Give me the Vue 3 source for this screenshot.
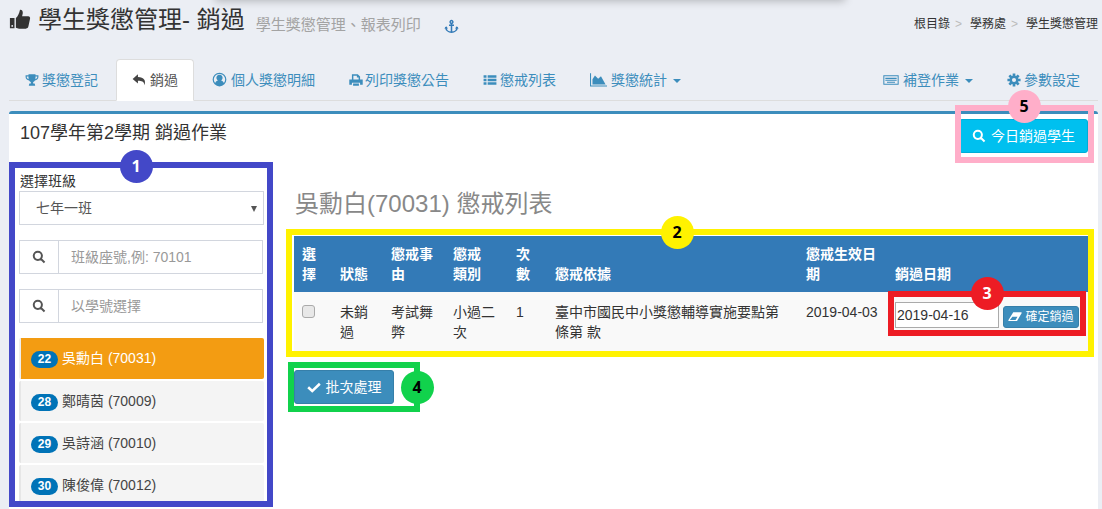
<script setup>
import { h } from 'vue'

// gear outline, teeth computed around the centre
const gear = () => {
  let d = ''
  for (let i = 0; i < 8; i++) {
    const a = (i * Math.PI) / 4
    const pts = [[-0.3, 7.8], [-0.2, 11.5], [0.2, 11.5], [0.3, 7.8]]
    pts.forEach(([t, r], j) => {
      const x = 12 + r * Math.cos(a + t)
      const y = 12 + r * Math.sin(a + t)
      d += `${i === 0 && j === 0 ? 'M' : 'L'}${x.toFixed(2)} ${y.toFixed(2)}`
    })
  }
  return d + 'Z M12 8.5a3.5 3.5 0 1 0 0 7a3.5 3.5 0 1 0 0-7Z'
}

const icons = {
  thumb: { f: 'M1 11h5v11H1zM3.500 18.500a1 1 0 1 0 0 2a1 1 0 1 0 0-2ZM7.500 11c2-1.500 3.600-5 4.500-9c2.200-.2 3.400 1.600 3 4l-.7 3H21c1.400 0 2.300 1.200 2 2.500l-1.800 8.500c-.3 1.400-1.300 2.500-2.800 2.500H11c-1.400 0-2.300-.8-3.500-.9z' },
  anchor: { s: 'M12 7v15M8 10h8M3 13c0 5 4 8 9 8s9-3 9-8M12 2.500a2.200 2.200 0 1 0 0 4.400a2.200 2.200 0 1 0 0-4.400Z', f: 'M0.500 15l3-3.500l3 3.500zM17.500 15l3-3.500l3 3.500z', sw: 2.4 },
  trophy: { f: 'M6 2h12v2h5v3c0 3-2.500 5.600-6 6c-.8 1.200-1.800 2-3 2.400V18h2.500l1 4H6.500l1-4H10v-2.600c-1.200-.4-2.200-1.200-3-2.400C3.500 12.600 1 10 1 7V4h5zM3 6v1c0 1.700 1.200 3 3.200 3.700C6 9.500 6 7.800 6 6zM21 6h-3c0 1.800 0 3.500-.2 4.700C19.800 10 21 8.700 21 7z' },
  reply: { f: 'M9.500 3.500L1 11L9.500 18.500v-4.500c6 0 9.500 1 10.500 7c2.500-7.500-.5-12.700-10.500-13z' },
  user: { f: 'M12 1a11 11 0 1 0 0 22a11 11 0 1 0 0-22ZM12 3a9 9 0 0 1 7 14.600c-1-2.300-2.800-3.600-4.500-4a5 5 0 1 0-5 0c-1.700.4-3.500 1.700-4.500 4A9 9 0 0 1 12 3Z' },
  print: { f: 'M5 2h10l4 4v5H16.500V7.500h-3V4.500h-6V11H5zM0.500 11h23v9H19v-3.500H5V20H0.500zM7 18h10v4H7z' },
  list: { f: 'M1 4h5v4H1zM8 4h15v4H8zM1 10h5v4H1zM8 10h15v4H8zM1 16h5v4H1zM8 16h15v4H8z' },
  chart: { f: 'M0 3h1.500v17.500H24V22H0zM3.500 19v-7.500l3.500-5l4.500 4.500l4-3.500l6.500 11.500z' },
  keyboard: { f: 'M0.500 5h23v14H0.500zM2 6.500v11h20v-11zM3.500 8.500h17v2h-17zM3.500 11.800h17v1.200h-17zM6 14.500h12v1.500H6z' },
  gear: { f: gear() },
  search: { s: 'M10 3a7 7 0 1 0 0 14a7 7 0 1 0 0-14ZM15 15l6.500 6.500', sw: 3.4 },
  check: { f: 'M3.500 10.500L9 16L20.500 4.500L23.500 8L9 22L.5 14z' },
  eraser: { f: 'M9 4h13.500c1 0 1.300 .8 .8 1.700L15.500 19H2c-1.300 0-1.800-1-1.200-2zM7.500 11.500L3.200 17h9.800l3.300-5.500z' }
}

const Ico = (p) => {
  const i = icons[p.name]
  return h('svg', { viewBox: '0 0 24 24', class: 'ico' }, [
    i.f ? h('path', { d: i.f, fill: 'currentColor', 'fill-rule': 'evenodd' }) : null,
    i.s ? h('path', { d: i.s, fill: 'none', stroke: 'currentColor', 'stroke-width': i.sw }) : null
  ])
}
Ico.props = ['name']

const leftTabs = [
  { icon: 'trophy', text: '獎懲登記' },
  { icon: 'reply', text: '銷過', active: true },
  { icon: 'user', text: '個人獎懲明細' },
  { icon: 'print', text: '列印獎懲公告' },
  { icon: 'list', text: '懲戒列表' },
  { icon: 'chart', text: '獎懲統計', caret: true }
]
const rightTabs = [
  { icon: 'keyboard', text: '補登作業', caret: true },
  { icon: 'gear', text: '參數設定' }
]
const students = [
  { no: 22, name: '吳勳白 (70031)', active: true },
  { no: 28, name: '鄭晴茵 (70009)' },
  { no: 29, name: '吳詩涵 (70010)' },
  { no: 30, name: '陳俊偉 (70012)' }
]
const marks = [
  { id: 1, cls: 'm1' },
  { id: 2, cls: 'm2' },
  { id: 3, cls: 'm3' },
  { id: 4, cls: 'm4' },
  { id: 5, cls: 'm5' }
]
</script>

<template>
  <div class="page">
    <div class="top-shadow"></div>

    <header class="head">
      <h1 class="title"><Ico name="thumb" class="title-ico" />學生獎懲管理- 銷過</h1>
      <span class="sub">學生獎懲管理、報表列印</span>
      <Ico name="anchor" class="anchor" />
      <div class="crumbs">
        <span>根目錄</span><i>&gt;</i><span>學務處</span><i>&gt;</i><span>學生獎懲管理</span>
      </div>
    </header>

    <nav class="tabs">
      <a v-for="t in leftTabs" :key="t.text" class="tab" :class="{ active: t.active }">
        <Ico :name="t.icon" :class="'tab-ico i-' + t.icon" />{{ t.text }}<b v-if="t.caret" class="caret"></b>
      </a>
      <div class="tabs-right">
        <a v-for="t in rightTabs" :key="t.text" class="tab">
          <Ico :name="t.icon" :class="'tab-ico i-' + t.icon" />{{ t.text }}<b v-if="t.caret" class="caret"></b>
        </a>
      </div>
    </nav>

    <section class="panel">
      <div class="panel-head">
        <h2 class="panel-title">107學年第2學期 銷過作業</h2>
        <button class="btn-today"><Ico name="search" class="btn-ico" />今日銷過學生</button>
      </div>

      <div class="panel-body">
        <aside class="side">
          <label class="side-label">選擇班級</label>
          <div class="select-wrap">
            <select class="select"><option>七年一班</option></select>
          </div>
          <div class="search-box">
            <span class="addon"><Ico name="search" /></span>
            <input class="search-input" placeholder="班級座號,例: 70101" />
          </div>
          <div class="search-box">
            <span class="addon"><Ico name="search" /></span>
            <input class="search-input" placeholder="以學號選擇" />
          </div>
          <ul class="students">
            <li v-for="s in students" :key="s.no" class="student" :class="{ active: s.active }">
              <span class="badge">{{ s.no }}</span>{{ s.name }}
            </li>
          </ul>
        </aside>

        <main class="main">
          <h3 class="main-title">吳勳白(70031) 懲戒列表</h3>
          <table class="grid">
            <colgroup>
              <col style="width: 38px" />
              <col style="width: 51px" />
              <col style="width: 62px" />
              <col style="width: 63px" />
              <col style="width: 39px" />
              <col style="width: 251px" />
              <col style="width: 89px" />
              <col />
            </colgroup>
            <thead>
              <tr>
                <th>選擇</th>
                <th>狀態</th>
                <th>懲戒事由</th>
                <th>懲戒<br />類別</th>
                <th>次數</th>
                <th>懲戒依據</th>
                <th>懲戒生效日期</th>
                <th>銷過日期</th>
              </tr>
            </thead>
            <tbody>
              <tr>
                <td><input type="checkbox" class="check" /></td>
                <td>未銷過</td>
                <td>考試舞弊</td>
                <td>小過二次</td>
                <td>1</td>
                <td>臺中市國民中小獎懲輔導實施要點第 條第 款</td>
                <td>2019-04-03</td>
                <td>
                  <div class="undo">
                    <input class="date" value="2019-04-16" />
                    <button class="btn-confirm"><Ico name="eraser" class="btn-ico-s" />確定銷過</button>
                  </div>
                </td>
              </tr>
            </tbody>
          </table>
          <button class="btn-batch"><Ico name="check" class="btn-ico" />批次處理</button>
        </main>
      </div>
    </section>

    <!-- 說明用的標註框 -->
    <template v-for="m in marks" :key="m.id">
      <div class="mark-box" :class="m.cls"></div>
      <div class="mark-dot" :class="m.cls">{{ m.id }}</div>
    </template>
  </div>
</template>

<style>
html, body {
  margin: 0;
  background: #ebeef4;
}
</style>

<style scoped>
.page {
  position: relative;
  width: 1102px;
  height: 509px;
  overflow: hidden;
  background: #ebeef4;
  font-family: "Liberation Sans", "Noto Sans CJK TC", sans-serif;
  font-size: 14px;
  line-height: 20px;
  color: #333;
}

.top-shadow {
  position: absolute;
  left: 215px;
  top: -12px;
  width: 630px;
  height: 12px;
  box-shadow: 0 1px 8px rgba(0, 0, 0, 0.25);
}

.ico {
  display: inline-block;
  width: 14px;
  height: 14px;
  vertical-align: -2px;
}

/* 頁首 */
.head {
  height: 59px;
  box-sizing: border-box;
  padding: 5px 4px 0 9px;
  display: flex;
  align-items: flex-start;
}

.title {
  margin: 0;
  font-size: 24px;
  line-height: 30px;
  font-weight: 400;
  color: #333;
}

.title-ico {
  width: 22px;
  height: 22px;
  margin-right: 7px;
  vertical-align: -2px;
}

.sub {
  margin: 10px 0 0 11px;
  font-size: 15px;
  color: #a3a3a3;
}

.anchor {
  margin: 14px 0 0 23px;
  color: #337ab7;
  width: 15px;
  height: 15px;
}

.crumbs {
  margin: 9px 0 0 auto;
  font-size: 12px;
  line-height: 20px;
  white-space: nowrap;
}

.crumbs i {
  font-style: normal;
  color: #bbb;
  margin: 0 8px 0 5px;
}

/* 分頁 */
.tabs {
  height: 42px;
  box-sizing: border-box;
  margin: 0 4px 10px 9px;
  display: flex;
  border-bottom: 1px solid #ddd;
}

.tab {
  height: 42px;
  box-sizing: border-box;
  padding: 10px 15px;
  margin-right: 2px;
  border: 1px solid transparent;
  border-radius: 4px 4px 0 0;
  color: #3c8dbc;
  white-space: nowrap;
}

.tab.active {
  background: #fff;
  border-color: #ddd;
  border-bottom-color: #fff;
  color: #555;
}

.tab-ico {
  width: 14px;
  height: 14px;
  margin-right: 4px;
}

.tab-ico.i-trophy { width: 14px; margin-right: 3px; }
.tab-ico.i-reply { width: 15px; height: 15px; margin-right: 3px; }
.tab-ico.i-user { width: 15px; height: 15px; margin-right: 4px; }
.tab-ico.i-print { width: 14px; margin-right: 2px; }
.tab-ico.i-list { width: 14px; margin-right: 3px; }
.tab-ico.i-chart { width: 17px; height: 17px; margin-right: 4px; vertical-align: -3px; }
.tab-ico.i-keyboard { width: 16px; height: 16px; margin-right: 4px; vertical-align: -3px; }
.tab-ico.i-gear { width: 14px; margin-right: 3px; }

.tab.active .tab-ico {
  color: #444;
}

.caret {
  display: inline-block;
  margin-left: 6px;
  vertical-align: 2px;
  border-top: 4px solid #3c8dbc;
  border-left: 4px solid transparent;
  border-right: 4px solid transparent;
}

.tabs-right {
  margin-left: auto;
  padding-right: 2px;
  display: flex;
}

.tabs-right .tab {
  margin-right: 0;
  margin-left: 2px;
}

/* 內容面板 */
.panel {
  margin: 0 4px 0 9px;
  height: 398px;
  background: #fff;
  border-top: 3px solid #3c8dbc;
  border-radius: 3px 3px 0 0;
}

.panel-head {
  height: 57px;
  box-sizing: border-box;
  padding: 5px 10px 0 11px;
  display: flex;
  justify-content: space-between;
  align-items: flex-start;
}

.panel-title {
  margin: 0;
  font-size: 18px;
  line-height: 28px;
  font-weight: 400;
  color: #333;
}

.btn-today {
  height: 34px;
  padding: 0 12px;
  border: 1px solid #00acd6;
  border-radius: 3px;
  background: #00c0ef;
  color: #fff;
  font: inherit;
}

.btn-ico {
  margin-right: 5px;
}

.panel-body {
  padding: 0 10px;
  display: grid;
  grid-template-columns: 245px 794px;
  column-gap: 30px;
}

/* 左欄 */
.side {
  display: flex;
  flex-direction: column;
}

.side-label {
  padding-left: 1px;
  height: 20px;
}

.select-wrap {
  position: relative;
}

.select-wrap::after {
  content: "";
  position: absolute;
  right: 7px;
  top: 15px;
  border-top: 6px solid #555;
  border-left: 3px solid transparent;
  border-right: 3px solid transparent;
}

.select {
  display: block;
  width: 100%;
  height: 34px;
  box-sizing: border-box;
  padding: 0 16px;
  border: 1px solid #d2d6de;
  background: #fff;
  color: #555;
  font: inherit;
  appearance: none;
  border-radius: 0;
}

.search-box {
  display: flex;
  width: 244px;
  height: 34px;
  box-sizing: border-box;
  margin-top: 15px;
  border: 1px solid #d2d6de;
}

.addon {
  width: 38px;
  flex: none;
  border-right: 1px solid #d2d6de;
  display: flex;
  align-items: center;
  justify-content: center;
  color: #555;
}

.search-input {
  flex: 1;
  min-width: 0;
  padding: 0 12px;
  border: 0;
  outline: 0;
  font: inherit;
  color: #555;
}

.search-input::placeholder {
  color: #999;
  opacity: 1;
}

.students {
  list-style: none;
  margin: 15px 0 0;
  padding: 0;
  display: flex;
  flex-direction: column;
  gap: 2px;
}

.student {
  height: 40px;
  box-sizing: border-box;
  padding: 10px;
  background: #f4f4f4;
  border-left: 2px solid #e6e6e6;
  border-radius: 2px;
  color: #444;
  white-space: nowrap;
}

.student.active {
  height: 41px;
  background: #f39c12;
  border-left-color: #eee;
  color: #fff;
}

.badge {
  display: inline-block;
  width: 27px;
  height: 17px;
  margin-right: 4px;
  border-radius: 9px;
  background: #0073b7;
  color: #fff;
  font-size: 12px;
  font-weight: 700;
  line-height: 17px;
  text-align: center;
}

/* 右欄 */
.main-title {
  margin: 16px 0 15px 1px;
  font-size: 24px;
  line-height: 34px;
  font-weight: 400;
  color: #888;
}

.grid {
  width: 794px;
  table-layout: fixed;
  border-collapse: collapse;
}

.grid th {
  padding: 8px;
  background: #337ab7;
  color: #fff;
  text-align: left;
  vertical-align: bottom;
  font-weight: 700;
}

.grid td {
  padding: 10px 8px 9px;
  background: #f9f9f9;
  vertical-align: top;
}

.check {
  appearance: none;
  display: block;
  width: 13px;
  height: 13px;
  margin: 3px 0 0;
  box-sizing: border-box;
  border: 1px solid #aaa;
  border-radius: 3px;
  background: #e8e8e8;
}

.undo {
  display: flex;
  align-items: flex-end;
  gap: 4px;
  width: 190px;
}

.date {
  width: 104px;
  height: 26px;
  box-sizing: border-box;
  padding: 1px;
  border: 1px solid #aaa;
  font: inherit;
  color: #333;
  outline: 0;
}

.btn-confirm {
  width: 76px;
  height: 22px;
  padding: 0;
  border: 1px solid #367fa9;
  border-radius: 3px;
  background: #3c8dbc;
  color: #fff;
  font: inherit;
  font-size: 12px;
  line-height: 18px;
  white-space: nowrap;
}

.btn-ico-s {
  width: 14px;
  height: 14px;
  margin-right: 3px;
  vertical-align: -3px;
}

.btn-batch {
  display: block;
  margin-top: 19px;
  width: 100px;
  height: 34px;
  padding: 0;
  border: 1px solid #367fa9;
  border-radius: 3px;
  background: #3c8dbc;
  color: #fff;
  font: inherit;
}

/* 標註 */
.mark-box {
  position: absolute;
  box-sizing: border-box;
  border: 6px solid;
  pointer-events: none;
}

.mark-dot {
  position: absolute;
  width: 33px;
  height: 33px;
  margin: -16.5px 0 0 -16.5px;
  border-radius: 50%;
  text-align: center;
  font-family: "Open Sans", "Liberation Sans", sans-serif;
  font-size: 16px;
  font-weight: 700;
  line-height: 33px;
  color: #000;
}

.mark-box.m1 { left: 9px; top: 162px; width: 264px; height: 345px; border-color: #4348c8; }
.mark-dot.m1 { left: 136px; top: 166px; background: #4348c8; color: #fff; }
.mark-box.m2 { left: 286px; top: 229px; width: 808px; height: 128px; border-color: #fff200; }
.mark-dot.m2 { left: 677px; top: 232px; background: #fff200; }
.mark-box.m3 { left: 888px; top: 291px; width: 198px; height: 45px; border-color: #ed1c24; }
.mark-dot.m3 { left: 987px; top: 293px; background: #ed1c24; color: #fff; }
.mark-box.m4 { left: 288px; top: 362px; width: 132px; height: 50px; border-color: #11d24c; }
.mark-dot.m4 { left: 417px; top: 387px; background: #11d24c; }
.mark-box.m5 { left: 955px; top: 105px; width: 139px; height: 58px; border-color: #ffaec9; }
.mark-dot.m5 { left: 1024px; top: 106px; background: #ffaec9; }
</style>
